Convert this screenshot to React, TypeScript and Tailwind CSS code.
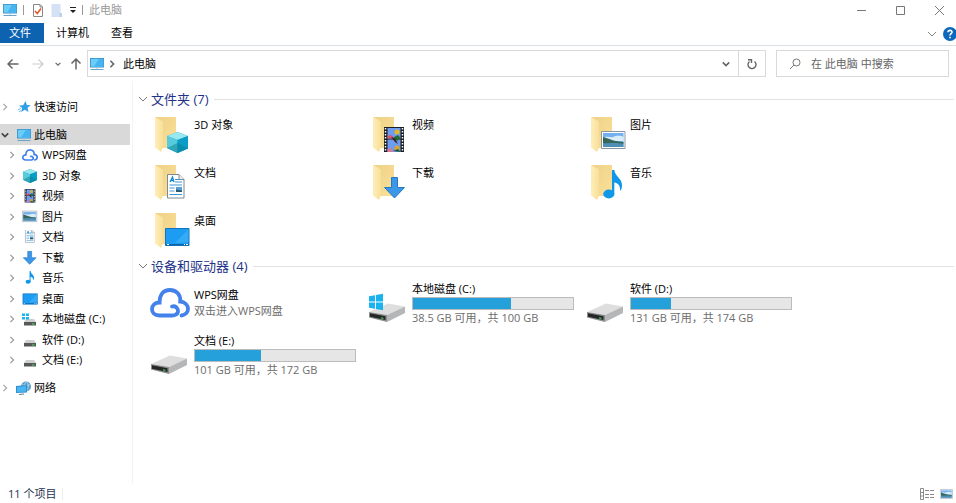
import type { ReactNode } from "react";

const folders = [
  { name: "3D 对象", icon: <CubeArt /> },
  { name: "视频", icon: <FilmArt /> },
  { name: "图片", icon: <PictureArt /> },
  { name: "文档", icon: <DocumentArt /> },
  { name: "下载", icon: <DownloadArt /> },
  { name: "音乐", icon: <MusicArt /> },
  { name: "桌面", icon: <DesktopArt /> },
];

const drives = [
  { name: "本地磁盘 (C:)", info: "38.5 GB 可用，共 100 GB", used: 61, system: true },
  { name: "软件 (D:)", info: "131 GB 可用，共 174 GB", used: 25, system: false },
  { name: "文档 (E:)", info: "101 GB 可用，共 172 GB", used: 41, system: false },
];

const treeItems = [
  { name: "WPS网盘", icon: <CloudIcon className="h-3.5 w-4" thin /> },
  { name: "3D 对象", icon: <Small box="17 15 21 21"><CubeArt /></Small> },
  { name: "视频", icon: <Small box="15 10 22 26"><FilmArt /></Small> },
  { name: "图片", icon: <Small box="15 13 26 22"><PictureArt /></Small> },
  { name: "文档", icon: <Small box="15 10 22 26"><DocumentArt /></Small> },
  { name: "下载", icon: <Small box="16 12 22 22"><DownloadArt /></Small> },
  { name: "音乐", icon: <Small box="14 5 26 31"><MusicArt /></Small> },
  { name: "桌面", icon: <Small box="14 14 26 20"><DesktopArt /></Small> },
  { name: "本地磁盘 (C:)", icon: <SmallDriveIcon system /> },
  { name: "软件 (D:)", icon: <SmallDriveIcon /> },
  { name: "文档 (E:)", icon: <SmallDriveIcon /> },
];

/* ---------- icons ---------- */

function Small({ box, children }: { box: string; children: ReactNode }) {
  return (
    <svg viewBox={box} className="h-3.5 w-4" aria-hidden="true">
      {children}
    </svg>
  );
}

function Chevron({ dir, className }: { dir: "right" | "down"; className: string }) {
  return (
    <svg viewBox="0 0 10 10" className={className} fill="none" stroke="currentColor" aria-hidden="true">
      <path d={dir === "right" ? "M3 1l4 4-4 4" : "M1 3l4 4 4-4"} />
    </svg>
  );
}

function ComputerIcon() {
  return (
    <svg viewBox="0 0 16 14" className="h-3.5 w-4 shrink-0" aria-hidden="true">
      <path d="M1 1h14v9.500H1z" fill="#3b8fc4" />
      <path d="M1.800 1.800h12.400v7.900H1.800z" fill="#6accf8" />
      <path d="M10 1.800h4.200v7.900H5z" fill="#45b4f1" />
      <path d="M7 10.500h2v1H7z" fill="#9fc6de" />
      <path d="M1.500 12h13v1h-13z" fill="#6aa5c8" />
    </svg>
  );
}

function CloudIcon({ className, thin = false }: { className: string; thin?: boolean }) {
  return (
    <svg
      viewBox="0 0 40 32"
      className={className}
      fill="none"
      stroke="#4382ea"
      strokeWidth={thin ? 4.2 : 3.8}
      strokeLinecap="round"
      aria-hidden="true"
    >
      <path d="M22 19.500c5-1.500 8.500 5.500 4 8-1 .7-2 1-4 1H9.500C4.500 28.500 2 25.500 2 22.300c0-3.800 3-6.800 7.600-6.800C9.500 8 13 3 20 3c6.500 0 11 5 10.200 11.500 4.800.5 7.800 3.700 7.800 7.300 0 3.500-2.500 6.200-6.500 6.700" />
    </svg>
  );
}

function CubeArt() {
  return (
    <>
      <path d="M17 19l10.500-4L38 19v12.500L27.500 36 17 31z" fill="#0fa3be" />
      <path d="M17 19l10.500-4L38 19l-10.500 4z" fill="#9ae8ef" />
      <path d="M17 19l10.500 4v13L17 31z" fill="#57cbdb" />
      <path d="M38 19l-10.500 4v13L38 31.500z" fill="#0c9dc7" />
      <path d="M17 31l10.500-5 10.500 5.500L27.500 36z" fill="#0a7f95" opacity=".5" />
    </>
  );
}

function FilmArt() {
  return (
    <>
      <path d="M16 10h20v25H16z" fill="#1d1d1d" />
      <path d="M19.500 11h13v10.500h-13zM19.500 22.500h13V35h-13z" fill="#6d9cf0" />
      <path d="M19.500 19l4-1 3 3.500h-7z" fill="#d9576b" />
      <circle cx="29" cy="15" r="2.500" fill="#e5b91d" />
      <path d="M26 20l4-2 2.500 3-3.500 3z" fill="#1f6d34" />
      <path d="M23 20l4 1 3 6-3-2z" fill="#3a2525" />
      <circle cx="29" cy="31" r="2.500" fill="#e0a421" />
      <path d="M19.500 32l4-1 2 4h-6z" fill="#d67aa0" />
      <path d="M25 34l5-2 2.500 3z" fill="#1f5d34" />
      <path d="M17.500 11v24M34.500 11v24" stroke="#fff" strokeWidth="1.500" strokeDasharray="1.500 1.500" />
    </>
  );
}

function PictureArt() {
  return (
    <>
      <path d="M15.500 14.500h23.500v17H15.500z" fill="#fff" stroke="#8a97a3" />
      <path d="M17 16h20.500v14H17z" fill="#74b0ee" />
      <path d="M17 21c4-3 7 0 10-1s6-2 10.500 0v4H17z" fill="#d9eefa" />
      <path d="M17 20c5 1 12 5 20.500 5v2H17z" fill="#37675a" />
      <path d="M17 26c6 1 12-1 20.500 1v3H17z" fill="#4f8fb5" />
    </>
  );
}

function DocumentArt() {
  return (
    <>
      <path d="M17.500 9.500H29l5 5v18.500H17.500z" fill="#fff" stroke="#7d8b95" />
      <path d="M29 9.500v5h5" fill="#e9edf0" stroke="#7d8b95" />
      <path d="M20 17l2.500-5 1.500 5M21 15.500h3" fill="none" stroke="#1886cf" strokeWidth="1.300" />
      <path d="M25 14.500h4M25 17h7M19.500 20h12.500M19.500 23h5M19.500 26h5M19.500 29.500h12.500" stroke="#3c97d3" />
      <path d="M26 22h6v5h-6z" fill="#579ed6" />
      <path d="M26 24.500l6 1V27h-6z" fill="#2a5665" />
    </>
  );
}

function DownloadArt() {
  return (
    <path d="M23.500 12.500h6v10h7L26.500 33l-10-10.500h7z" fill="#3b98e8" stroke="#2478c4" />
  );
}

function MusicArt() {
  return (
    <>
      <path d="M26 5h2.300c.8 7 8 8 7.700 16-.1 2-.8 4-2 5 .8-5-2-8-5.700-8.500V29H26z" fill="#0f97ea" />
      <ellipse cx="22.800" cy="29" rx="5.600" ry="4.400" fill="#0f97ea" />
    </>
  );
}

function DesktopArt() {
  return (
    <>
      <path d="M15.500 15.500h23.500v17H15.500z" fill="#1d9cf3" stroke="#1173bd" />
      <path d="M38.500 16v13L25 30z" fill="#45b5fa" opacity=".6" />
      <path d="M16 31.500h23" stroke="#0b62a5" />
      <path d="M17 31.500h2M34 31.500h1M36 31.500h2" stroke="#fff" />
    </>
  );
}

function FolderIcon({ children }: { children: ReactNode }) {
  return (
    <svg viewBox="0 0 40 38" className="h-[38px] w-10 shrink-0" aria-hidden="true">
      <defs>
        <linearGradient id="folderBack" x1="0" x2="1" y1="0" y2="1">
          <stop offset="0" stopColor="#efd187" />
          <stop offset="1" stopColor="#fae09a" />
        </linearGradient>
        <linearGradient id="folderFront" x1="0" x2="1">
          <stop offset="0" stopColor="#ffeebb" />
          <stop offset="1" stopColor="#f8df98" />
        </linearGradient>
      </defs>
      <path d="M5 0h21v31H12z" fill="url(#folderBack)" />
      <path d="M5 0l8 4.500v26L11 35l-6-4.500z" fill="url(#folderFront)" />
      {children}
    </svg>
  );
}

function WindowsMark() {
  return (
    <path d="M1 3.200l6-1v6.300H1zM8 2l7-1.200v7.700H8zM1 9.500h6v6.300l-6-1zM8 9.500h7v7.700L8 16z" fill="#19b3ef" />
  );
}

function DriveIcon({ system }: { system: boolean }) {
  return (
    <svg viewBox="0 0 40 32" className="h-8 w-10 shrink-0" aria-hidden="true">
      <path d="M1 19L20 10.500l17 3-18 8.500z" fill="#dedede" />
      <path d="M37 13.500V20l-18 9v-7z" fill="#b4b6b7" />
      <path d="M1 19l18 3v7L1 24.500z" fill="#8a8c8d" />
      <path d="M2 20.200l15.500 3v3.900L2 23.700z" fill="#242627" />
      <path d="M13 24.200l2.500.5v1.200l-2.500-.5z" fill="#35d04c" />
      {system && <WindowsMark />}
    </svg>
  );
}

function SmallDriveIcon({ system = false }: { system?: boolean }) {
  return (
    <svg viewBox="0 0 16 16" className="h-4 w-4" aria-hidden="true">
      <path d="M4 8h8l2 3H2z" fill="#cfcfcf" />
      <path d="M2 11h12v3.500H2z" fill="#555859" />
      <path d="M10 12.500h2.500v1H10z" fill="#4ddb62" />
      {system && <path d="M0 2.500h3V5H0zM4 2.500h3V5H4zM0 6h3v2.500H0zM4 6h3v2.500H4z" fill="#19b3ef" />}
    </svg>
  );
}

function StarIcon() {
  return (
    <svg viewBox="0 0 16 16" className="h-4 w-4" aria-hidden="true">
      <path d="M9.500 2l1.300 4 4 .3-3.300 2.500 1 4.200-3.600-2.300L5 13l1.200-4L3 6.500l4.200-.3z" fill="#2f9fe8" />
      <path d="M2 11l3-2M3 13l2-1.500" stroke="#65b9ee" />
    </svg>
  );
}

function NetworkIcon() {
  return (
    <svg viewBox="0 0 16 16" className="h-4 w-4" aria-hidden="true">
      <circle cx="10" cy="6.500" r="5" fill="#5c9fc9" />
      <path d="M6 4.500c3 1.500 5 1.500 8 0M10 1.500c-2 3-2 6 0 10M10 1.500c3 3 3 6 0 10" fill="none" stroke="#b8dcee" strokeWidth=".8" />
      <path d="M0 6l11-1v7.500L0 13z" fill="#2f8fd0" />
      <path d="M1 6.900l9-.8v5.500l-9 .5z" fill="#49b6f2" />
      <path d="M3 14.500l5-.5" stroke="#5b7f98" />
    </svg>
  );
}

/* ---------- window parts ---------- */

function TitleBar() {
  return (
    <header className="flex h-[22px] items-start">
      <div className="flex h-5 items-center pl-0.5">
        <ComputerIcon />
        <span className="ml-[5px] h-2.5 w-px bg-[#999]" />
        <button type="button" aria-label="属性" className="ml-2">
          <svg viewBox="0 0 12 15" className="h-[15px] w-3" fill="none">
            <path d="M1.500 1.500H8L10.500 4v9.500h-9z" fill="#fff" stroke="#888" />
            <path d="M8 1.500V4h2.500" stroke="#888" />
            <path d="M3 8l2.300 2.500L9 5.500" stroke="#e0582c" strokeWidth="1.600" />
          </svg>
        </button>
        <button type="button" aria-label="新建文件夹" className="ml-[7px]">
          <svg viewBox="0 0 12 15" className="h-[15px] w-3">
            <path d="M.5 1h9v9H11v4H.5z" fill="#d5e2f5" />
            <path d="M8.500 10H11v4H8.500z" fill="#bdcfe9" />
          </svg>
        </button>
        <button type="button" aria-label="自定义快速访问工具栏" className="ml-1.5">
          <svg viewBox="0 0 8 8" className="h-2 w-2" fill="#222">
            <path d="M1 1h6v1H1zM1 4h6L4 7z" />
          </svg>
        </button>
        <span className="ml-[5px] h-2.5 w-px bg-[#999]" />
        <h1 className="ml-1.5 text-[#999]">此电脑</h1>
      </div>
      <div className="ml-auto flex h-5 gap-1.5 text-[#777]">
        <button type="button" aria-label="最小化" className="flex w-[33px] items-center justify-center">
          <svg viewBox="0 0 11 11" className="h-[11px] w-[11px]" fill="none" stroke="currentColor"><path d="M1 5.500h9" /></svg>
        </button>
        <button type="button" aria-label="最大化" className="flex w-[33px] items-center justify-center">
          <svg viewBox="0 0 11 11" className="h-[11px] w-[11px]" fill="none" stroke="currentColor"><path d="M1.500 1.500h8v8h-8z" /></svg>
        </button>
        <button type="button" aria-label="关闭" className="flex w-[33px] items-center justify-center">
          <svg viewBox="0 0 11 11" className="h-[11px] w-[11px]" fill="none" stroke="currentColor"><path d="M1 1l9 9M10 1l-9 9" /></svg>
        </button>
      </div>
    </header>
  );
}

function MenuBar() {
  return (
    <nav className="flex h-6 items-start border-b border-[#dadfe4] pt-px">
      <button type="button" className="h-5 w-11 bg-[#0e63b1] pr-1 text-white">文件</button>
      <button type="button" className="ml-3 h-5">计算机</button>
      <button type="button" className="ml-[22px] h-5">查看</button>
      <div className="ml-auto flex h-[22px] items-center">
        <button type="button" aria-label="展开功能区">
          <Chevron dir="down" className="h-2.5 w-2.5 text-[#888]" />
        </button>
        <button type="button" aria-label="帮助" className="ml-1.5">
          <svg viewBox="0 0 13 14" className="h-3.5 w-[13px]">
            <circle cx="7" cy="7" r="7" fill="#0c67bd" />
            <path d="M5 5.300C5 2.700 9.200 2.800 9 5.200 8.900 6.700 7 6.700 7 8.500M7 9.700v1.600" fill="none" stroke="#fff" strokeWidth="1.600" />
          </svg>
        </button>
      </div>
    </nav>
  );
}

function AddressBar() {
  return (
    <div className="flex h-[31px] items-end pr-[7px]">
      <div className="flex h-[27px] w-[87px] shrink-0 items-center pl-[7px] text-[#666]">
        <button type="button" aria-label="后退">
          <svg viewBox="0 0 12 12" className="h-3 w-3" fill="none" stroke="currentColor" strokeWidth="1.500"><path d="M11.500 6H1M5.500 1.500L1 6l4.500 4.500" /></svg>
        </button>
        <button type="button" aria-label="前进" disabled className="ml-[13px] text-[#ccc]">
          <svg viewBox="0 0 12 12" className="h-3 w-3" fill="none" stroke="currentColor" strokeWidth="1.200"><path d="M.5 6H11M6.500 1.500L11 6l-4.500 4.500" /></svg>
        </button>
        <button type="button" aria-label="最近浏览的位置" className="ml-[11px]">
          <Chevron dir="down" className="h-1.5 w-1.5 stroke-2" />
        </button>
        <button type="button" aria-label="上移" className="ml-[9px]">
          <svg viewBox="0 0 12 12" className="h-3 w-3" fill="none" stroke="currentColor" strokeWidth="1.500"><path d="M6 11.500V1M1.500 5.500L6 1l4.500 4.500" /></svg>
        </button>
      </div>
      <div className="flex h-[27px] flex-1 items-center border border-[#d9d9d9] pl-px">
        <ComputerIcon />
        <Chevron dir="right" className="ml-0.5 h-2 w-2.5 stroke-2 text-[#666]" />
        <button type="button" className="ml-1.5">此电脑</button>
        <button type="button" aria-label="以前的位置" className="mr-2 ml-auto">
          <Chevron dir="down" className="h-2 w-2 stroke-2 text-[#666]" />
        </button>
        <button type="button" aria-label="刷新" className="flex h-full w-[27px] items-center justify-center border-l border-[#d9d9d9]">
          <svg viewBox="0 0 12 12" className="h-3 w-3" fill="none" stroke="#666" strokeWidth="1.400">
            <path d="M3.500 3.500a4 4 0 1 0 5 0M2 1.700h3.500V5" />
          </svg>
        </button>
      </div>
      <label className="ml-2.5 flex h-[27px] w-[173px] items-center border border-[#d9d9d9] pl-3">
        <svg viewBox="0 0 12 12" className="h-3 w-3 shrink-0" fill="none" stroke="#777">
          <circle cx="7.500" cy="4.500" r="3.500" />
          <path d="M5 7L1 11" />
        </svg>
        <input
          type="text"
          aria-label="搜索"
          placeholder="在 此电脑 中搜索"
          className="ml-2.5 w-full min-w-0 outline-none placeholder:text-[#666]"
        />
      </label>
    </div>
  );
}

function TopNode({ name, icon, open = false }: { name: string; icon: ReactNode; open?: boolean }) {
  return (
    <button
      type="button"
      aria-expanded={open}
      className={`flex h-[21px] w-full items-center pl-px ${open ? "bg-[#d9d9d9]" : ""}`}
    >
      <Chevron
        dir={open ? "down" : "right"}
        className={`h-2 w-2 ${open ? "stroke-2 text-[#444]" : "stroke-[1.5] text-[#a6a6a6]"}`}
      />
      <span className="ml-[7px] flex w-4 justify-center">{icon}</span>
      <span className="ml-0.5">{name}</span>
    </button>
  );
}

function Sidebar() {
  return (
    <aside className="w-[133px] shrink-0 border-r border-[#f3f3f3] pt-[15px] pr-0.5">
      <TopNode name="快速访问" icon={<StarIcon />} />
      <div className="py-[7px]">
        <TopNode name="此电脑" icon={<ComputerIcon />} open />
        <ul>
          {treeItems.map((item) => (
            <li key={item.name} className="odd:h-5 even:h-[21px]">
              <button type="button" className="flex h-full w-full items-center pl-2">
                <Chevron dir="right" className="h-2 w-2 stroke-[1.5] text-[#999]" />
                <span className="ml-1.5 flex w-4 justify-center">{item.icon}</span>
                <span className="ml-1">{item.name}</span>
              </button>
            </li>
          ))}
        </ul>
      </div>
      <TopNode name="网络" icon={<NetworkIcon />} />
    </aside>
  );
}

function SectionHeading({ title }: { title: string }) {
  return (
    <div className="flex h-5 items-center pl-[5px]">
      <Chevron dir="down" className="h-2.5 w-2.5 text-[#777]" />
      <h2 className="ml-[3px] text-[13px] leading-5 text-[#1e3287]">{title}</h2>
      <span className="ml-1.5 h-px flex-1 bg-[#e2e2e2]" />
    </div>
  );
}

function DriveTile({ name, info, used, system }: (typeof drives)[number]) {
  return (
    <li className="flex h-[52px] items-start gap-1">
      <span className="pt-3.5"><DriveIcon system={system} /></span>
      <div className="w-[162px] pt-0.5">
        <p className="leading-4">{name}</p>
        <div
          role="meter"
          aria-label={name}
          aria-valuenow={used}
          aria-valuemin={0}
          aria-valuemax={100}
          className="h-[13px] border border-[#bcbcbc] bg-[#e6e6e6]"
        >
          <div className="h-full bg-[#26a0da]" style={{ width: `${used}%` }} />
        </div>
        <p className="leading-4 whitespace-nowrap text-[#6d6d6d]">{info}</p>
      </div>
    </li>
  );
}

function Content() {
  return (
    <main className="min-w-0 flex-1 pt-2 pr-0.5">
      <section>
        <SectionHeading title="文件夹 (7)" />
        <ul className="grid grid-cols-[repeat(auto-fill,218px)] pt-2 pl-[17px]">
          {folders.map((folder) => (
            <li key={folder.name} className="flex h-12 items-start gap-1">
              <FolderIcon>{folder.icon}</FolderIcon>
              <span className="leading-4">{folder.name}</span>
            </li>
          ))}
        </ul>
      </section>
      <section className="-mt-[5px]">
        <SectionHeading title="设备和驱动器 (4)" />
        <ul className="grid grid-cols-[repeat(auto-fill,218px)] pt-[3px] pl-[17px]">
          <li className="flex h-[52px] items-start gap-1 pt-2">
            <CloudIcon className="h-8 w-10 shrink-0" />
            <div className="leading-4">
              <p>WPS网盘</p>
              <p className="text-[#6d6d6d]">双击进入WPS网盘</p>
            </div>
          </li>
          {drives.map((drive) => (
            <DriveTile key={drive.name} {...drive} />
          ))}
        </ul>
      </section>
    </main>
  );
}

function StatusBar() {
  return (
    <footer className="flex h-[19px] items-center pr-[3px] pl-2 text-[#1e3250]">
      <span>11 个项目</span>
      <span className="ml-1.5 h-3 w-px bg-[#eee]" />
      <button type="button" aria-label="详细信息" className="ml-auto">
        <svg viewBox="0 0 14 12" className="h-3 w-3.5" fill="none" stroke="#8a8a8a">
          <path d="M.5.500h3v11h-3zM.5 4.500h3M.5 8h3M5 2.500h4M10 2.500h4M5 6.500h4M10 6.500h4M5 9.500h4M10 9.500h4" />
        </svg>
      </button>
      <button type="button" aria-label="大缩略图" className="ml-1.5">
        <svg viewBox="15 14 25 18" className="h-2.5 w-[13px]" aria-hidden="true"><PictureArt /></svg>
      </button>
    </footer>
  );
}

export default function App() {
  return (
    <div className="flex min-h-screen flex-col bg-white font-['Open_Sans','Noto_Sans_CJK_SC',sans-serif] text-[11px] leading-4 text-black">
      <TitleBar />
      <MenuBar />
      <AddressBar />
      <div className="flex flex-1 pt-1">
        <Sidebar />
        <Content />
      </div>
      <StatusBar />
    </div>
  );
}
